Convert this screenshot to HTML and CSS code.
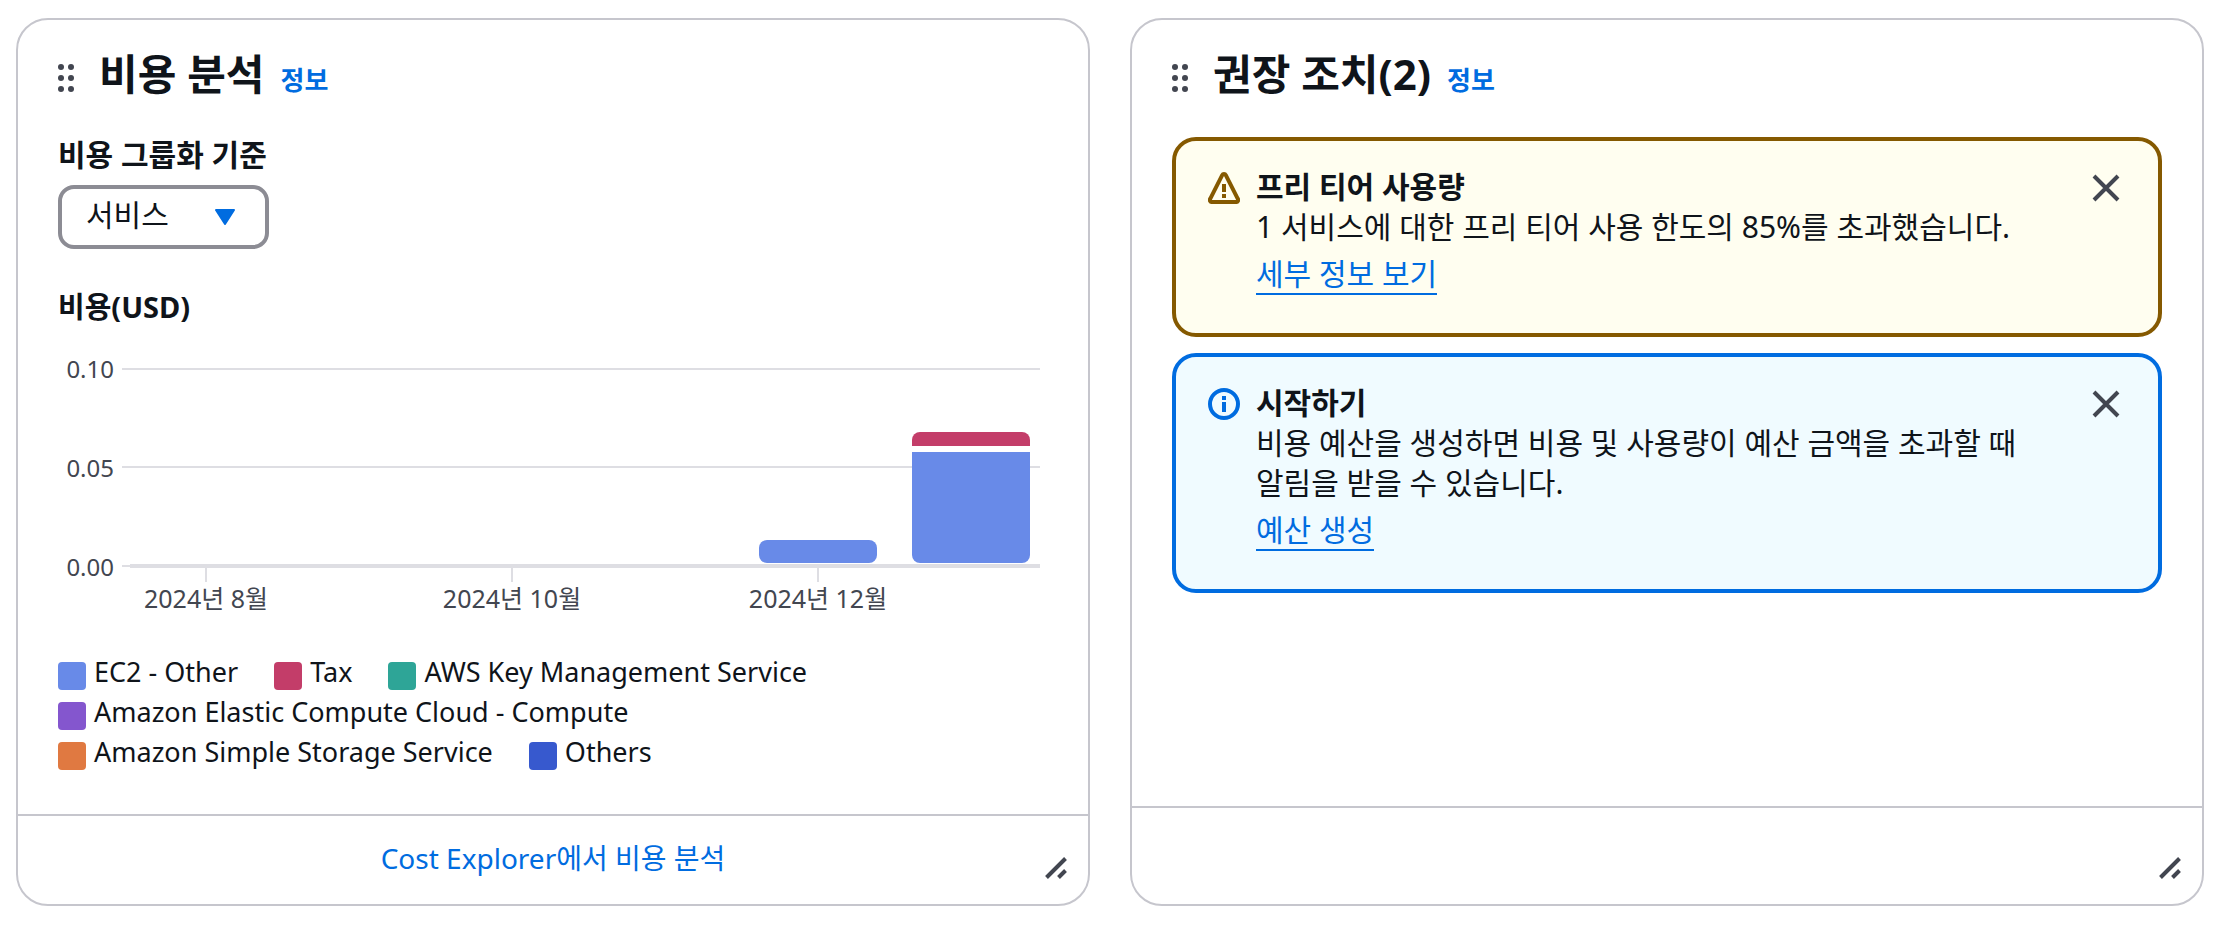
FILE: index.html
```html
<!DOCTYPE html>
<html lang="ko">
<head>
  <meta charset="UTF-8">
  <meta name="viewport" content="width=device-width, initial-scale=1">
  <title>비용 분석</title>
  <link rel="stylesheet" href="styles.css">
</head>
<body>
  <main class="board">
    <!-- Cost analysis -->
    <section class="card">
      <header class="card-header">
        <button class="drag-handle" type="button" aria-label="이동">
          <svg width="16" height="28" viewBox="0 0 16 28" fill="#424650">
            <circle cx="3" cy="3" r="3"/><circle cx="13" cy="3" r="3"/>
            <circle cx="3" cy="14" r="3"/><circle cx="13" cy="14" r="3"/>
            <circle cx="3" cy="25" r="3"/><circle cx="13" cy="25" r="3"/>
          </svg>
        </button>
        <div class="heading">
          <h2>비용 분석</h2>
          <a class="info" href="#">정보</a>
        </div>
      </header>

      <div class="card-body">
        <label class="field-label" for="groupBy">비용 그룹화 기준</label>
        <div class="select">
          <select id="groupBy">
            <option>서비스</option>
          </select>
          <svg class="caret" width="20" height="16" viewBox="0 0 20 16">
            <path d="M1 1h18L10 15z" fill="#006ce0" stroke="#006ce0" stroke-width="2" stroke-linejoin="round"/>
          </svg>
        </div>

        <h3 class="chart-title">비용(USD)</h3>
        <div class="chart">
          <div class="y-axis">
            <span>0.10</span>
            <span>0.05</span>
            <span>0.00</span>
          </div>
          <div class="plot">
            <div class="grid-lines">
              <div class="line"></div>
              <div class="line"></div>
              <div class="baseline"></div>
            </div>
            <div class="bars">
              <div class="bar"></div>
              <div class="bar"></div>
              <div class="bar"></div>
              <div class="bar"></div>
              <div class="bar">
                <div class="segment ec2" style="height: 12%"></div>
              </div>
              <div class="bar">
                <div class="segment tax" style="height: 7%"></div>
                <div class="segment ec2" style="height: 57%"></div>
              </div>
            </div>
            <div class="x-axis">
              <span class="tick">2024년 8월</span>
              <span></span>
              <span class="tick">2024년 10월</span>
              <span></span>
              <span class="tick">2024년 12월</span>
              <span></span>
            </div>
          </div>
        </div>

        <ul class="legend">
          <li><span class="swatch ec2"></span>EC2 - Other</li>
          <li><span class="swatch tax"></span>Tax</li>
          <li><span class="swatch kms"></span>AWS Key Management Service</li>
          <li><span class="swatch compute"></span>Amazon Elastic Compute Cloud - Compute</li>
          <li><span class="swatch storage"></span>Amazon Simple Storage Service</li>
          <li><span class="swatch others"></span>Others</li>
        </ul>
      </div>

      <footer class="card-footer">
        <a href="#">Cost Explorer에서 비용 분석</a>
      </footer>
      <button class="resize-handle" type="button" aria-label="크기 조정">
        <svg width="22" height="22" viewBox="0 0 22 22" stroke="#424650" stroke-width="4">
          <path d="M1.5 20.5l19-19M13.5 20.5l7-7"/>
        </svg>
      </button>
    </section>

    <!-- Recommended actions -->
    <section class="card">
      <header class="card-header">
        <button class="drag-handle" type="button" aria-label="이동">
          <svg width="16" height="28" viewBox="0 0 16 28" fill="#424650">
            <circle cx="3" cy="3" r="3"/><circle cx="13" cy="3" r="3"/>
            <circle cx="3" cy="14" r="3"/><circle cx="13" cy="14" r="3"/>
            <circle cx="3" cy="25" r="3"/><circle cx="13" cy="25" r="3"/>
          </svg>
        </button>
        <div class="heading">
          <h2>권장 조치(2)</h2>
          <a class="info" href="#">정보</a>
        </div>
      </header>

      <div class="card-body alerts">
        <div class="alert warning">
          <svg class="alert-icon" width="32" height="32" viewBox="0 0 32 32">
            <path d="M14.2 3.2a2 2 0 0 1 3.6 0l12 23.6a2 2 0 0 1-1.8 3.2H4a2 2 0 0 1-1.8-3.2z" fill="none" stroke="#855900" stroke-width="4" stroke-linejoin="round"/>
            <path d="M14 12h4v8h-4zM14 22h4v4h-4z" fill="#855900"/>
          </svg>
          <div class="alert-text">
            <h3>프리 티어 사용량</h3>
            <p>1 서비스에 대한 프리 티어 사용 한도의 85%를 초과했습니다.</p>
            <a href="#">세부 정보 보기</a>
          </div>
          <button class="close" type="button" aria-label="닫기">
            <svg width="28" height="28" viewBox="0 0 28 28" stroke="#424650" stroke-width="4">
              <path d="M2 2l24 24M26 2L2 26"/>
            </svg>
          </button>
        </div>

        <div class="alert notice">
          <svg class="alert-icon" width="32" height="32" viewBox="0 0 32 32">
            <circle cx="16" cy="16" r="14" fill="none" stroke="#006ce0" stroke-width="4"/>
            <path d="M14 8h4v4h-4zM14 14h4v10h-4z" fill="#006ce0"/>
          </svg>
          <div class="alert-text">
            <h3>시작하기</h3>
            <p>비용 예산을 생성하면 비용 및 사용량이 예산 금액을 초과할 때 알림을 받을 수 있습니다.</p>
            <a href="#">예산 생성</a>
          </div>
          <button class="close" type="button" aria-label="닫기">
            <svg width="28" height="28" viewBox="0 0 28 28" stroke="#424650" stroke-width="4">
              <path d="M2 2l24 24M26 2L2 26"/>
            </svg>
          </button>
        </div>
      </div>

      <footer class="card-footer tall"></footer>
      <button class="resize-handle" type="button" aria-label="크기 조정">
        <svg width="22" height="22" viewBox="0 0 22 22" stroke="#424650" stroke-width="4">
          <path d="M1.5 20.5l19-19M13.5 20.5l7-7"/>
        </svg>
      </button>
    </section>
  </main>
</body>
</html>
```
FILE: styles.css
```css
* {
  margin: 0;
  padding: 0;
  box-sizing: border-box;
}
body {
  font-family: "Noto Sans", "Noto Sans CJK KR", sans-serif;
  font-size: 30px;
  line-height: 40px;
  color: #0f141a;
  background: #fff;
  word-break: keep-all;
}
a {
  color: #006ce0;
  text-decoration: none;
}
button {
  border: 0;
  background: none;
  cursor: pointer;
}
svg {
  display: block;
}

/* Two cards side by side */
.board {
  display: grid;
  grid-template-columns: 1fr 1fr;
  gap: 40px;
  padding: 18px 22px 16px 16px;
}
.card {
  position: relative;
  display: flex;
  flex-direction: column;
  border: 2px solid #c6c6cd;
  border-radius: 32px;
}
.card-header {
  display: flex;
  align-items: center;
  gap: 25px;
  padding: 30px 40px 39px;
}
.drag-handle {
  padding-top: 7px;
  cursor: grab;
}
.heading {
  display: flex;
  align-items: baseline;
  gap: 16px;
}
h2 {
  font-size: 42px;
  line-height: 48px;
}
.info {
  font-size: 26px;
  line-height: 28px;
  font-weight: 700;
}
.card-body {
  flex: 1;
  padding: 0 40px 44px;
}
.card-footer {
  display: flex;
  justify-content: center;
  align-items: center;
  min-height: 90px;
  padding-bottom: 4px;
  border-top: 2px solid #c6c6cd;
  font-size: 28px;
}
.card-footer.tall {
  min-height: 98px;
}
/* Sits over the bottom right corner of the card */
.resize-handle {
  position: absolute;
  right: 21px;
  bottom: 25px;
  cursor: nwse-resize;
}

/* Group by */
.field-label {
  display: block;
  margin-bottom: 12px;
  line-height: 36px;
  font-weight: 700;
}
.select {
  position: relative;
  width: fit-content;
}
.select select {
  display: block;
  height: 64px;
  padding: 0 96px 4px 24px;
  border: 4px solid #8c8c94;
  border-radius: 16px;
  appearance: none;
  background: #fff;
  color: inherit;
  font: inherit;
}
.caret {
  position: absolute;
  top: 24px;
  right: 34px;
  pointer-events: none;
}

/* Chart */
.chart-title {
  margin: 38px 0 32px;
  font-size: 29px;
}
.chart {
  display: grid;
  grid-template-columns: 56px 1fr;
  gap: 8px;
  padding-right: 8px;
  font-size: 24px;
  color: #424650;
}
.y-axis {
  display: flex;
  flex-direction: column;
  justify-content: space-between;
  height: 218px;
  line-height: 20px;
  text-align: right;
}
.plot {
  display: grid;
  grid-template-rows: 200px auto;
  padding-top: 9px;
}
.grid-lines,
.bars {
  grid-area: 1 / 1;
}
.grid-lines {
  display: flex;
  flex-direction: column;
  justify-content: space-between;
}
.line {
  height: 2px;
  background: #dedee3;
}
.baseline {
  display: flex;
  align-items: center;
}
.baseline::before {
  content: "";
  width: 8px;
  height: 2px;
  background: #dedee3;
}
.baseline::after {
  content: "";
  flex: 1;
  height: 4px;
  background: #dedee3;
}
.bars,
.x-axis {
  display: grid;
  grid-template-columns: repeat(6, minmax(0, 1fr));
  column-gap: 35px;
  padding: 0 10px 0 25px;
}
.bars {
  padding-bottom: 5px;
}
.bar {
  display: flex;
  flex-direction: column;
  justify-content: flex-end;
  gap: 6px;
}
.segment:first-child {
  border-top-left-radius: 8px;
  border-top-right-radius: 8px;
}
.segment:last-child {
  border-bottom-left-radius: 8px;
  border-bottom-right-radius: 8px;
}
.x-axis span {
  display: flex;
  flex-direction: column;
  align-items: center;
  font-size: 25px;
  line-height: 32px;
  white-space: nowrap;
}
.tick::before {
  content: "";
  width: 2px;
  height: 14px;
  background: #dedee3;
}

/* Legend */
.legend {
  display: flex;
  flex-wrap: wrap;
  gap: 4px 36px;
  margin-top: 40px;
  list-style: none;
  font-size: 27px;
  line-height: 36px;
}
.legend li {
  display: flex;
  align-items: flex-end;
  gap: 8px;
}
.swatch {
  width: 28px;
  height: 28px;
  border-radius: 4px;
}
.ec2 { background: #688ae8; }
.tax { background: #c33d69; }
.kms { background: #2ea597; }
.compute { background: #8456ce; }
.storage { background: #e07941; }
.others { background: #3759ce; }

/* Alerts */
.alerts {
  display: flex;
  flex-direction: column;
  gap: 16px;
}
.alert {
  display: flex;
  align-items: flex-start;
  padding: 26px 38px 38px 32px;
  border: 4px solid;
  border-radius: 24px;
}
.warning {
  border-color: #855900;
  background: #fffef0;
}
.notice {
  border-color: #006ce0;
  background: #f0fbff;
}
.alert-icon {
  flex: none;
  margin-top: 5px;
}
.alert-text {
  flex: 1;
  margin: 0 16px;
}
.alert-text h3 {
  font-size: 30px;
}
.alert-text a {
  display: block;
  width: fit-content;
  margin-top: 8px;
  border-bottom: 2px solid;
  line-height: 38px;
}
.close {
  padding-top: 7px;
}
```
